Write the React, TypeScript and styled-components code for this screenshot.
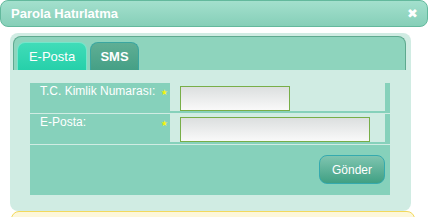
import React from 'react';
import styled, { createGlobalStyle } from 'styled-components';

const GlobalStyle = createGlobalStyle`
    body {
        margin: 0;
        background: #ffffff;
        font-family: 'Liberation Sans', Arial, sans-serif;
    }
`;

interface Field {
    label: string;
    inputWidth: number;
}

const fields: Field[] = [
    { label: 'T.C. Kimlik Numarası:', inputWidth: 110 },
    { label: 'E-Posta:', inputWidth: 190 },
];

function App() {
    return (
        <Wrapper>
            <GlobalStyle />
            <TitleBar>
                <Title>Parola Hatırlatma</Title>
                <Close>✖</Close>
            </TitleBar>
            <Panel>
                <TabBar>
                    <Tab active width={70}>E-Posta</Tab>
                    <Tab width={49}>SMS</Tab>
                </TabBar>
                <Form>
                    {fields.map(field => (
                        <Row key={field.label}>
                            <LabelCell>
                                <span>{field.label}</span>
                                <Star>★</Star>
                            </LabelCell>
                            <FieldCell>
                                <Input width={field.inputWidth} />
                            </FieldCell>
                        </Row>
                    ))}
                    <Footer>
                        <Button>Gönder</Button>
                    </Footer>
                </Form>
            </Panel>
            <Notice />
        </Wrapper>
    );
}

export default App;

const Wrapper = styled.div`
    width: 428px;
    height: 217px;
    overflow: hidden;
`;

const TitleBar = styled.div`
    height: 27px;
    box-sizing: border-box;
    border: 1px solid #63b99d;
    border-radius: 8px;
    background: linear-gradient(#a3e0cd, #86cfb8);
    display: flex;
    align-items: center;
    justify-content: space-between;
    padding: 0 9px 0 10px;
`;

const Title = styled.span`
    color: #ffffff;
    font-weight: bold;
    font-size: 13px;
`;

const Close = styled.span`
    color: #ffffff;
    font-size: 13px;
    font-family: 'DejaVu Sans', sans-serif;
`;

const Panel = styled.div`
    margin: 6px 17px 0 10px;
    height: 178px;
    box-sizing: border-box;
    background: #d0ece3;
    border-radius: 8px;
    padding: 3px 5px 0 3px;
`;

const TabBar = styled.div`
    height: 34px;
    box-sizing: border-box;
    border: 1px solid #5ea98f;
    border-bottom: none;
    border-radius: 8px 8px 0 0;
    background: #8ed4bd;
    display: flex;
    align-items: flex-end;
    gap: 3px;
    padding-left: 3px;
`;

const Tab = styled.div<{ active?: boolean; width: number }>`
    width: ${p => p.width}px;
    height: 28px;
    box-sizing: border-box;
    border: 1px solid ${p => (p.active ? '#74e6cb' : '#3aa6a0')};
    border-bottom: none;
    border-radius: 8px 8px 0 0;
    background: ${p =>
        p.active
            ? 'linear-gradient(#40dcb8, #26d0aa)'
            : 'linear-gradient(#5fae94, #45a086)'};
    color: #ffffff;
    font-size: 13px;
    font-weight: ${p => (p.active ? 'normal' : 'bold')};
    display: flex;
    align-items: center;
    justify-content: center;
`;

const Form = styled.div`
    margin: 13px 0 0 17px;
    width: 360px;
    display: flex;
    flex-direction: column;
    gap: 1px;
`;

const Row = styled.div`
    display: grid;
    grid-template-columns: 140px 1fr;
    height: 30px;
`;

const LabelCell = styled.div`
    background: #86d1bb;
    color: #ffffff;
    font-size: 12px;
    line-height: 14px;
    padding: 1px 2px 0 10px;
    display: flex;
    justify-content: space-between;
    align-items: flex-start;
`;

const Star = styled.span`
    color: #f4f40a;
    font-size: 8px;
    line-height: 8px;
    margin-top: 5px;
    font-family: 'DejaVu Sans', sans-serif;
`;

const FieldCell = styled.div`
    border-right: 5px solid #86d1bb;
    border-bottom: 2px solid #86d1bb;
    padding: 3px 0 0 10px;
`;

const Input = styled.div<{ width: number }>`
    width: ${p => p.width}px;
    height: 25px;
    box-sizing: border-box;
    border: 1px solid #78ae48;
    background: linear-gradient(#dcdfdf, #f9f9f9);
`;

const Footer = styled.div`
    height: 50px;
    background: #86d1bb;
    display: flex;
    justify-content: flex-end;
    align-items: flex-start;
    padding: 10px 5px 0 0;
    box-sizing: border-box;
`;

const Button = styled.div`
    width: 66px;
    height: 29px;
    box-sizing: border-box;
    border: 1px solid #35aaae;
    border-radius: 8px;
    background: linear-gradient(#7fc5b0, #40a083);
    color: #ffffff;
    font-size: 12px;
    display: flex;
    align-items: center;
    justify-content: center;
`;

const Notice = styled.div`
    margin: 0 13px 0 11px;
    height: 30px;
    border: 1px solid #f2d95c;
    border-radius: 8px;
    background: #fdf7da;
`;
